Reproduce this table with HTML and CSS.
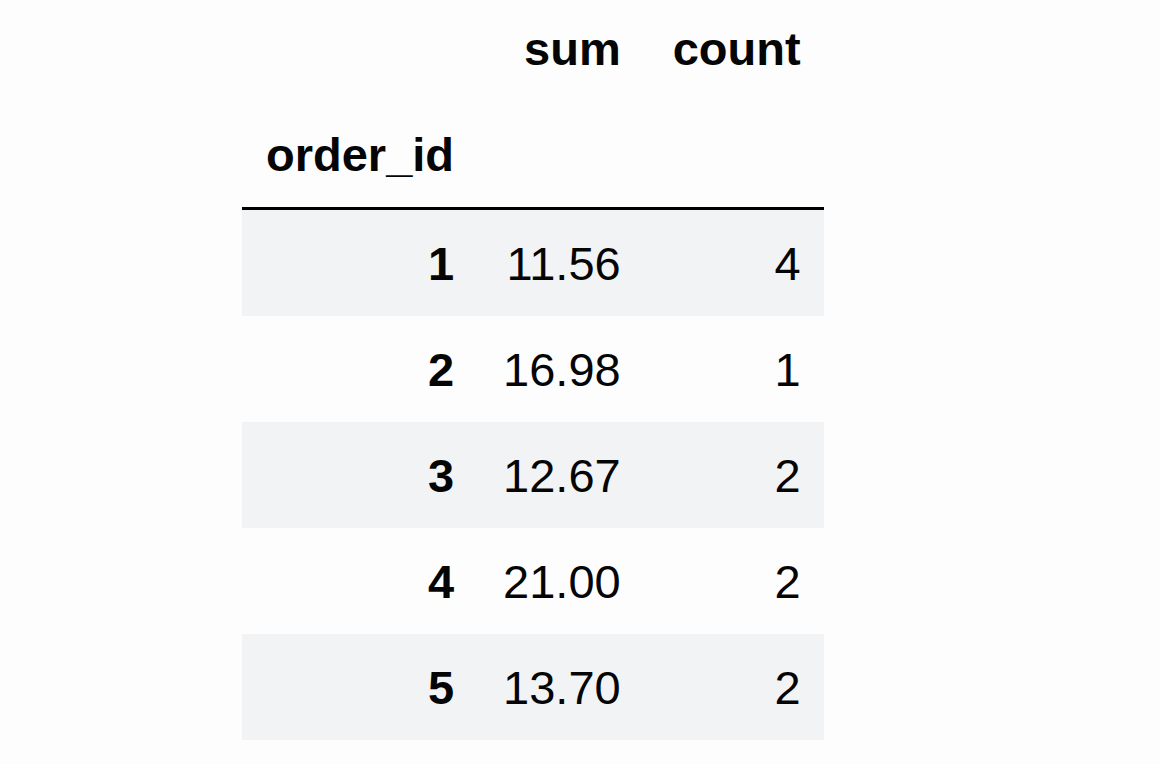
FILE: index.html
```html
<!DOCTYPE html>
<html>
<head>
<meta charset="utf-8">
<link rel="stylesheet" href="styles.css">
</head>
<body>
<div class="page">
<table class="df">
  <thead>
    <tr class="cols">
      <th class="blank"></th>
      <th class="c-sum">sum</th>
      <th class="c-count">count</th>
    </tr>
    <tr class="idxname">
      <th class="name">order_id</th>
      <th class="c-sum"></th>
      <th class="c-count"></th>
    </tr>
  </thead>
  <tbody>
    <tr class="odd"><th>1</th><td class="c-sum">11.56</td><td class="c-count">4</td></tr>
    <tr><th>2</th><td class="c-sum">16.98</td><td class="c-count">1</td></tr>
    <tr class="odd"><th>3</th><td class="c-sum">12.67</td><td class="c-count">2</td></tr>
    <tr><th>4</th><td class="c-sum">21.00</td><td class="c-count">2</td></tr>
    <tr class="odd"><th>5</th><td class="c-sum">13.70</td><td class="c-count">2</td></tr>
  </tbody>
</table>
</div>
</body>
</html>
```
FILE: styles.css
```css
html, body {
  margin: 0;
  padding: 0;
  background: #fdfdfe;
}
.page {
  padding-left: 242px;
  padding-top: 0;
}
.df {
  border-collapse: collapse;
  margin-top: -5px;
  font-family: "Liberation Sans", Arial, Helvetica, sans-serif;
  font-size: 47px;
  color: #050505;
}
.df th, .df td {
  height: 106px;
  padding: 0 23px 0 24px;
  vertical-align: middle;
  text-align: right;
  white-space: nowrap;
}
.df .c-sum {
  padding-left: 26px;
}
.df .c-count {
  padding-left: 29px;
}
.df th {
  font-weight: bold;
}
.df td {
  font-weight: normal;
}
.df th.name {
  text-align: left;
}
.df thead {
  border-bottom: 3px solid #000;
}
.df tbody tr.odd {
  background: #f2f3f5;
}
```
